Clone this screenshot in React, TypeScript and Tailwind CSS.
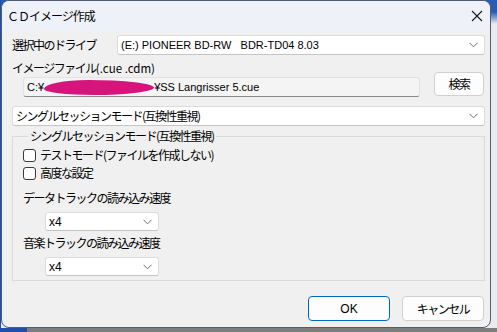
import React from "react";

const JP = "font-['Noto_Sans_CJK_JP',sans-serif] text-[12px] tracking-[-1.5px]";
const LATIN = "font-['Liberation_Sans','Noto_Sans_CJK_JP',sans-serif] text-[11px]";

function Chevron() {
  return (
    <svg width="9" height="6" viewBox="0 0 9 6" className="shrink-0">
      <path d="M0.5 0.8 L4.5 4.8 L8.5 0.8" fill="none" stroke="#6b6b6b" strokeWidth="1" />
    </svg>
  );
}

function Select({ children, className }: { children: React.ReactNode; className: string }) {
  return (
    <div
      className={`flex items-center justify-between rounded-[3px] border border-[#dcdcdc] border-b-[#c4c4c4] bg-white pl-[3px] pr-[6px] ${className}`}
    >
      <span className="whitespace-pre leading-none">{children}</span>
      <Chevron />
    </div>
  );
}

function Checkbox({ label }: { label: string }) {
  return (
    <label className="flex h-[18px] items-center gap-[4px]">
      <span className="h-[13px] w-[13px] rounded-[3px] border border-[#3a3a3a] bg-white" />
      <span className={JP}>{label}</span>
    </label>
  );
}

function Button({ children, primary }: { children: React.ReactNode; primary?: boolean }) {
  return (
    <button
      type="button"
      className={`flex h-[25px] w-[82px] items-center justify-center rounded-[4px] border bg-[#fdfdfd] ${
        primary ? "border-[#0067c0]" : "border-[#d0d0d0]"
      }`}
    >
      {children}
    </button>
  );
}

export default function App() {
  return (
    <div className="flex h-[332px] w-[497px] flex-col overflow-hidden border-l-[1px] border-[#1f4fa6] bg-[linear-gradient(180deg,#2a5bb0_0px,#2a5bb0_12px,#e9ebef_24px)]">
      <div className="flex h-[328px] w-[490px] shrink-0 flex-col overflow-hidden rounded-[8px] border border-[#4d5d78] bg-[#f0f0f0] text-black">
        {/* title bar */}
        <div className="flex h-[29px] shrink-0 items-center justify-between bg-[#eef2f8] pl-[5px] pr-[7px]">
          <span className="font-['Noto_Sans_CJK_JP',sans-serif] text-[12px] tracking-[-1px]">
            ＣＤイメージ作成
          </span>
          <svg width="12" height="12" viewBox="0 0 12 12">
            <path d="M1 1 L11 11 M11 1 L1 11" stroke="#1a1a1a" strokeWidth="1.1" />
          </svg>
        </div>

        <div className="flex flex-col pl-[10px] pr-[5px]">
          <div className="mt-[5px] flex h-[20px] items-center">
            <span className={`w-[105px] ${JP}`}>選択中のドライブ</span>
            <Select className={`h-[20px] flex-1 ${LATIN}`}>{"(E:) PIONEER BD-RW   BDR-TD04 8.03"}</Select>
          </div>

          <div className="mt-[6px] flex justify-between">
            <div className="flex w-[408px] flex-col">
              <span className={`h-[14px] leading-[14px] ${JP}`}>
                イメージファイル<span className="tracking-normal text-[11.5px]">(.cue .cdm)</span>
              </span>
              <div
                className={`ml-[11px] mt-[2px] flex h-[20px] w-[397px] items-center rounded-[3px] border border-[#e2e2e2] border-b-[#8a8a8a] bg-[#f4f4f4] pl-[3px] ${LATIN}`}
              >
                <span>C:¥</span>
                <span className="h-[15px] w-[110px] rounded-[40%_60%_55%_45%/60%_50%_50%_40%] bg-[#d5157b]" />
                <span className="whitespace-pre">¥SS Langrisser 5.cue</span>
              </div>
            </div>
            <button
              type="button"
              className={`mr-[1px] mt-[11px] flex h-[24px] w-[50px] items-center justify-center rounded-[4px] border border-[#d0d0d0] bg-[#fdfdfd] ${JP}`}
            >
              検索
            </button>
          </div>

          <Select className={`mt-[9px] h-[20px] ${JP}`}>シングルセッションモード(互換性重視)</Select>

          <fieldset className="mt-[3px] flex flex-col border border-[#dadada] pb-[4px] pl-[10px]">
            <legend className={`ml-[5px] px-[2px] leading-[14px] ${JP}`}>シングルセッションモード(互換性重視)</legend>
            <div className="mt-[3px]">
              <Checkbox label="テストモード(ファイルを作成しない)" />
              <Checkbox label="高度な設定" />
            </div>
            <span className={`mt-[9px] h-[14px] leading-[14px] ${JP}`}>データトラックの読み込み速度</span>
            <Select className={`ml-[22px] mt-[7px] h-[19px] w-[114px] ${LATIN} text-[12px]`}>x4</Select>
            <span className={`mt-[5px] h-[14px] leading-[14px] ${JP}`}>音楽トラックの読み込み速度</span>
            <Select className={`ml-[22px] mt-[7px] h-[19px] w-[114px] ${LATIN} text-[12px]`}>x4</Select>
          </fieldset>

          <div className="mr-[1px] mt-[15px] flex justify-end gap-[12px]">
            <Button primary>
              <span className={`${LATIN} text-[12px]`}>OK</span>
            </Button>
            <Button>
              <span className={JP}>キャンセル</span>
            </Button>
          </div>
        </div>
      </div>
      <div className="flex h-[4px] shrink-0">
        <div className="w-[26px] bg-[#1f4fa6]" />
        <div className="flex-1 bg-[#7d7d7d]" />
      </div>
    </div>
  );
}
